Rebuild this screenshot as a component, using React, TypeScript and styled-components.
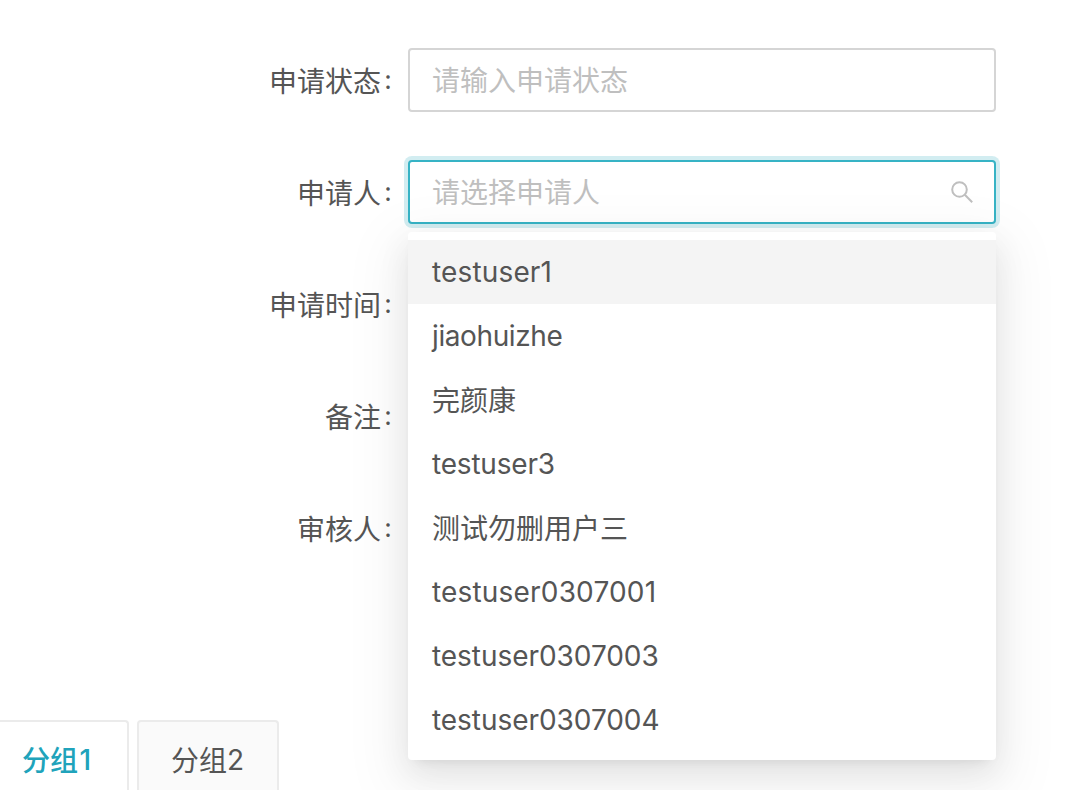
import React from "react";
import styled, { createGlobalStyle, css } from "styled-components";

const GlobalStyle = createGlobalStyle`
  * { box-sizing: border-box; }
  body {
    margin: 0;
    background: #fff;
    color: #555;
    font-family: Inter, "Noto Sans CJK SC", sans-serif;
    font-size: 28px;
    overflow: hidden;
  }
`;

const Page = styled.main`
  display: flex;
  flex-direction: column;
  justify-content: space-between;
  height: 790px;
  overflow: hidden;
`;

const Form = styled.form`
  display: flex;
  flex-direction: column;
  gap: 48px;
  padding-top: 48px;
  width: 996px;
`;

const FormItem = styled.div`
  display: grid;
  grid-template-columns: 408px 588px;
  height: 64px;
`;

const Label = styled.label`
  display: flex;
  align-items: center;
  justify-content: flex-end;
  padding-right: 16px;
  line-height: 56px;
`;

const LabelText = styled.span`
  padding-top: 4px;
`;

const Colon = styled.span`
  width: 8px;
  margin-left: 3px;
  font-size: 26px;
  text-align: center;
`;

const Control = styled.div`
  position: relative;
`;

const Field = styled.div<{ $focused?: boolean }>`
  display: flex;
  align-items: center;
  justify-content: space-between;
  height: 64px;
  padding: 0 20px 0 22px;
  border: 2px solid #d5d5d5;
  border-radius: 4px;
  background: #fff;
  color: #bfbfbf;
  line-height: 60px;
  ${(p) =>
    p.$focused &&
    css`
      border-color: #36b3c5;
      box-shadow: 0 0 0 4px rgba(32, 163, 187, 0.2);
    `}
`;

const Dropdown = styled.ul`
  position: absolute;
  top: 72px;
  left: 0;
  width: 588px;
  margin: 0;
  padding: 8px 0;
  list-style: none;
  background: #fff;
  border-radius: 4px;
  box-shadow:
    0 6px 12px -8px rgba(0, 0, 0, 0.12),
    0 12px 32px 0 rgba(0, 0, 0, 0.08),
    0 18px 56px 16px rgba(0, 0, 0, 0.05);
`;

const Option = styled.li<{ $active?: boolean; $tracking?: number }>`
  height: 64px;
  padding: 0 24px;
  line-height: 64px;
  white-space: nowrap;
  letter-spacing: ${(p) => p.$tracking ?? 0}px;
  background: ${(p) => (p.$active ? "#f4f4f4" : "transparent")};
`;

/* Han glyphs sit slightly below the Latin baseline */
const Han = styled.span`
  vertical-align: -1px;
  line-height: 1;
`;

const Tabs = styled.nav`
  display: flex;
  gap: 8px;
  height: 70px;
  margin-left: -46px;
`;

const Tab = styled.div<{ $active?: boolean }>`
  width: ${(p) => (p.$active ? 175 : 142)}px;
  padding-left: ${(p) => (p.$active ? 66 : 32)}px;
  border: 2px solid #ebebeb;
  border-bottom: 0;
  border-radius: 4px 4px 0 0;
  line-height: 76px;
  white-space: nowrap;
  background: ${(p) => (p.$active ? "#fff" : "#fafafa")};
  color: ${(p) => (p.$active ? "#20a3bb" : "#555")};
  font-weight: ${(p) => (p.$active ? 500 : 400)};

  ${Han} {
    margin-right: ${(p) => (p.$active ? 1.5 : 0)}px;
  }
`;

const Placeholder = styled.span`
  padding-top: 2px;
`;

const SearchIcon = () => (
  <svg width="24" height="24" viewBox="0 0 24 24" fill="none" stroke="#bfbfbf" strokeWidth="2">
    <circle cx="9.5" cy="9.5" r="7.3" />
    <path d="M14.8 14.8 22.2 22.2" />
  </svg>
);

const options = [
  { name: "testuser1", tracking: 0.15 },
  { name: "jiaohuizhe", tracking: -0.4 },
  { name: "完颜康", han: true },
  { name: "testuser3", tracking: -0.2 },
  { name: "测试勿删用户三", han: true },
  { name: "testuser0307001", tracking: 0.18 },
  { name: "testuser0307003", tracking: -0.05 },
  { name: "testuser0307004", tracking: -0.05 },
];

const Row = ({ label, children }: { label: string; children?: React.ReactNode }) => (
  <FormItem>
    <Label>
      <LabelText>{label}</LabelText>
      <Colon>:</Colon>
    </Label>
    <Control>{children}</Control>
  </FormItem>
);

export default function App() {
  return (
    <>
      <GlobalStyle />
      <Page>
        <Form>
          <Row label="申请状态">
            <Field>
              <Placeholder>请输入申请状态</Placeholder>
            </Field>
          </Row>
          <Row label="申请人">
            <Field $focused>
              <Placeholder>请选择申请人</Placeholder>
              <SearchIcon />
            </Field>
            <Dropdown>
              {options.map((o, i) => (
                <Option key={o.name} $active={i === 0} $tracking={o.tracking}>
                  {o.han ? <Han>{o.name}</Han> : o.name}
                </Option>
              ))}
            </Dropdown>
          </Row>
          <Row label="申请时间" />
          <Row label="备注" />
          <Row label="审核人" />
        </Form>
        <Tabs>
          <Tab $active>
            <Han>分组</Han>1
          </Tab>
          <Tab>
            <Han>分组</Han>2
          </Tab>
        </Tabs>
      </Page>
    </>
  );
}
